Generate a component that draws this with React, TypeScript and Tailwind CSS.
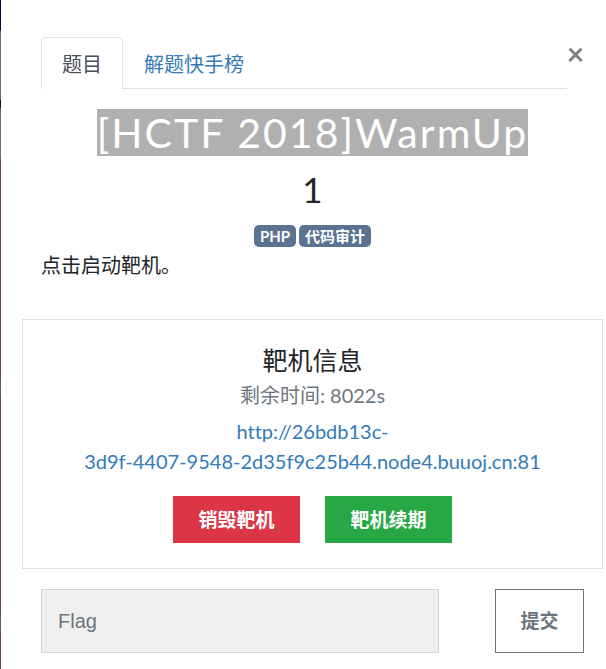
const tags = ["PHP", "代码审计"];

export default function App() {
  return (
    <div className="flex min-h-screen bg-white font-['Lato','Noto_Sans_CJK_SC',sans-serif] text-xl leading-[30px] text-[#212529]">
      <div
        aria-hidden="true"
        className="w-px shrink-0 bg-[linear-gradient(to_bottom,#020a3c_0px,#020a3c_30px,#6e6e70_31px,#6e6e70_99px,#08081c_101px,#20140c_107px,#6e6e70_109px,#6e6e70_158px,#6b4653_159px,#6b4653_379px,#606060_381px,#606060_395px,#6b4653_397px,#6b4653_614px,#606060_618px,#606060_631px,#6b4653_632px)]"
      />
      <main className="min-w-0 flex-1 pt-[37px] pr-[22px] pl-10">
        <header className="flex items-start">
          <div role="tablist" className="flex min-w-0 flex-1 border-b border-[#dee2e6]">
            <button
              type="button"
              role="tab"
              aria-selected="true"
              className="-mb-px h-[52px] rounded-t-[5px] border border-b-0 border-[#dee2e6] bg-white px-5 pt-px text-[#495057]"
            >
              题目
            </button>
            <button
              type="button"
              role="tab"
              aria-selected="false"
              className="border border-b-0 border-transparent px-5 pt-px text-[#337ab7]"
            >
              解题快手榜
            </button>
          </div>
          <button
            type="button"
            aria-label="Close"
            className="flex h-8 w-[17px] items-center justify-center text-[30px] leading-[30px] font-bold text-[#808080]"
          >
            ×
          </button>
        </header>

        <section className="pt-5">
          <h1 className="flex justify-center text-[41px] leading-[47px] font-normal tracking-wider whitespace-nowrap text-white">
            <span className="bg-[#b0b0b0]">[HCTF 2018]WarmUp</span>
          </h1>
          <h2 className="mt-3 text-center text-[35px] leading-[42px]">1</h2>
          <ul className="mt-[15px] flex justify-center gap-[3px]">
            {tags.map((tag) => (
              <li
                key={tag}
                className="h-[22px] rounded-[5px] bg-[#5b7290] px-[6px] text-[15px] leading-[22px] font-bold text-white"
              >
                {tag}
              </li>
            ))}
          </ul>
          <p className="mt-[3px]">点击启动靶机。</p>
        </section>

        <section className="-mx-[19px] mt-[39px] border border-[#dfdfdf] p-[25px] text-center">
          <h3 className="text-[25px] leading-[30px]">靶机信息</h3>
          <p className="mt-[5px] text-[#6c757d]">剩余时间: 8022s</p>
          <p className="mt-[6px]">
            <a
              href="http://26bdb13c-3d9f-4407-9548-2d35f9c25b44.node4.buuoj.cn:81"
              className="text-[#337ab7] [font-variant-ligatures:none]"
            >
              http://26bdb13c-
              <br />
              3d9f-4407-9548-2d35f9c25b44.node4.buuoj.cn:81
            </a>
          </p>
          <div className="mt-5 flex justify-center gap-[25px]">
            <button type="button" className="h-[47px] w-[127px] bg-[#dc3545] text-[19px] font-bold text-white">
              销毁靶机
            </button>
            <button type="button" className="h-[47px] w-[127px] bg-[#28a745] text-[19px] font-bold text-white">
              靶机续期
            </button>
          </div>
        </section>

        <form className="mt-5 flex justify-between gap-5" onSubmit={(event) => event.preventDefault()}>
          <input
            type="text"
            aria-label="Flag"
            placeholder="Flag"
            className="h-16 w-[398px] min-w-0 border border-[#ced4da] bg-[#efefef] px-4 font-['Liberation_Sans',sans-serif] text-xl placeholder:text-[#6c757d]"
          />
          <button
            type="submit"
            className="h-16 w-[89px] shrink-0 border border-[#6c757d] text-[19px] font-bold text-[#6c757d]"
          >
            提交
          </button>
        </form>
      </main>
    </div>
  );
}
